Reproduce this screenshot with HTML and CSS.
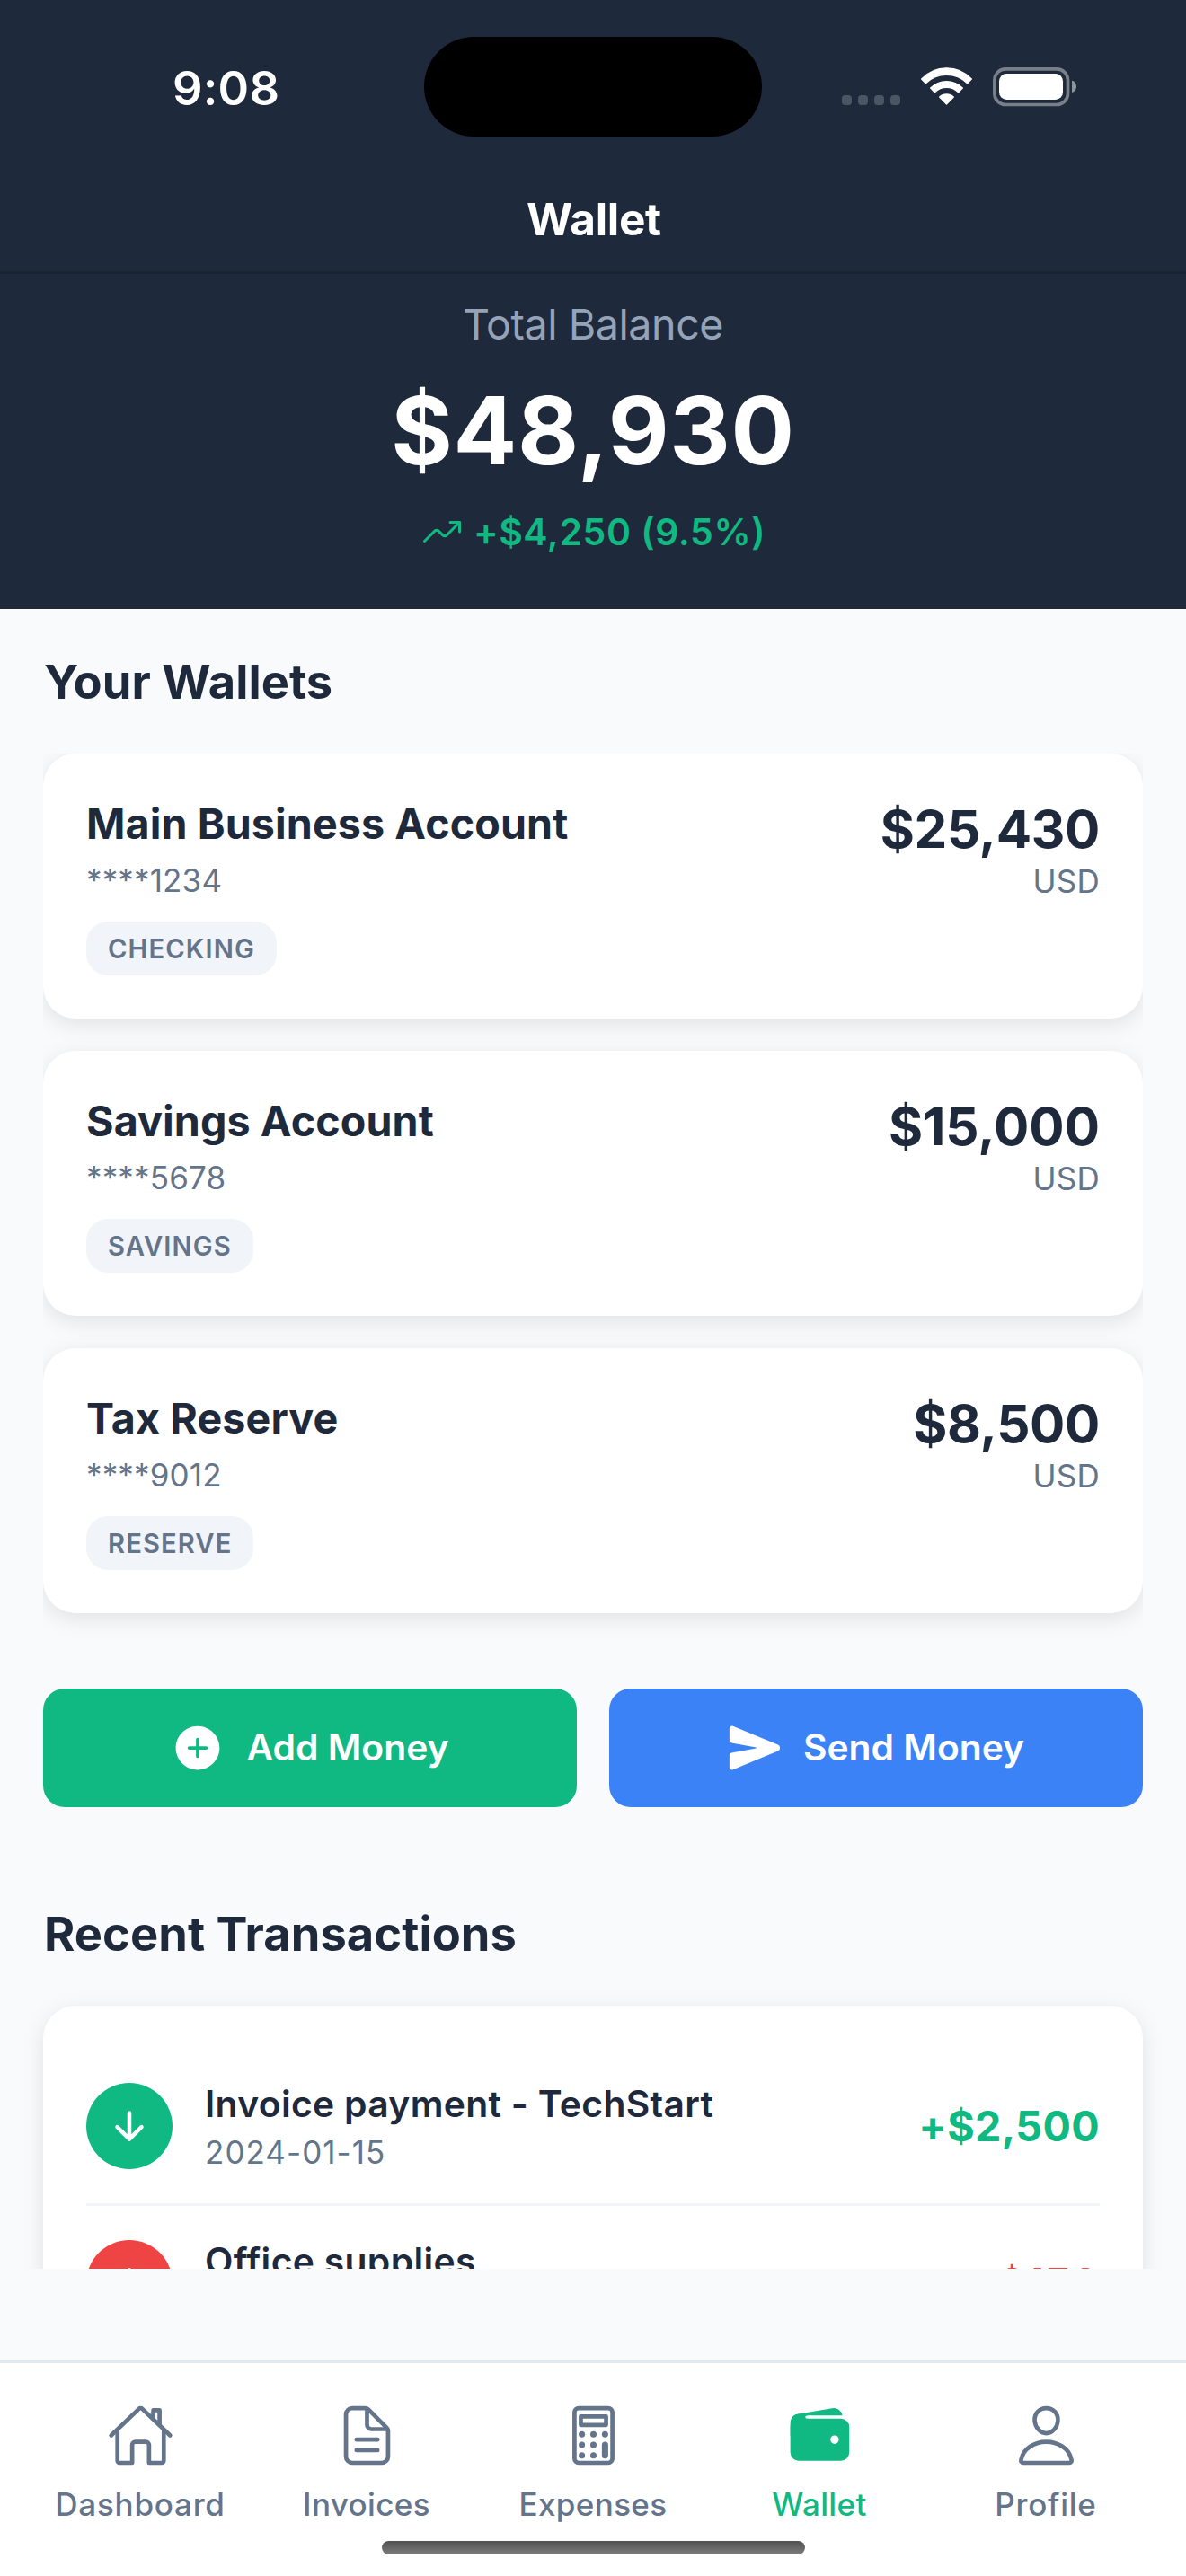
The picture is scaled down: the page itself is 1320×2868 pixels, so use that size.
FILE: index.html
```html
<!DOCTYPE html>
<html lang="en">
<head>
<meta charset="utf-8">
<title>Wallet</title>
<link rel="stylesheet" href="styles.css">
</head>
<body>
<div class="screen">
  <header class="top">
    <div class="status">
      <span class="time">9:08</span>
      <div class="island"></div>
      <svg class="status-icons" width="264" height="48" viewBox="0 0 792 144">
        <g fill="#4b5563">
          <rect x="0" y="102" width="33" height="33" rx="11"/>
          <rect x="54" y="102" width="33" height="33" rx="11"/>
          <rect x="108" y="102" width="33" height="33" rx="11"/>
          <rect x="162" y="102" width="33" height="33" rx="11"/>
        </g>
        <g fill="#fff" stroke="#fff" stroke-width="4" stroke-linejoin="round">
          <path d="M266 48A114 114 0 0 1 433 48L419 62A100 100 0 0 0 280 62Z"/>
          <path d="M296 78A76 76 0 0 1 403 78L389 92A57 57 0 0 0 310 92Z"/>
          <path d="M326 108A35 35 0 0 1 373 108L349.500 132Z"/>
        </g>
        <rect x="509.500" y="14.500" width="245" height="119" rx="37" fill="none" stroke="#787f89" stroke-width="11"/>
        <rect x="525" y="30" width="213" height="87" rx="25" fill="#fff"/>
        <path d="M768 53c9 2 15 10 15 20s-6 18-15 20z" fill="#8f959d"/>
      </svg>
    </div>
    <h1 class="title">Wallet</h1>
  </header>

  <section class="balance">
    <div class="balance-label">Total Balance</div>
    <div class="balance-amount">$48,930</div>
    <div class="balance-change">
      <svg width="48" height="48" viewBox="0 0 512 512" fill="none" stroke="currentColor" stroke-width="32" stroke-linecap="round" stroke-linejoin="round">
        <path d="M352 144h112v112"/>
        <path d="M48 368l121.370-121.370a32 32 0 0 1 45.260 0l50.740 50.740a32 32 0 0 0 45.260 0L464 144"/>
      </svg>
      <span>+$4,250 (9.5%)</span>
    </div>
  </section>

  <main class="scroll">
    <h2 class="section-title">Your Wallets</h2>
    <div class="wallets">
      <article class="card wallet">
        <div>
          <div class="wallet-name">Main Business Account</div>
          <div class="wallet-number">****1234</div>
          <span class="badge">CHECKING</span>
        </div>
        <div class="wallet-side">
          <div class="wallet-amount tight">$25,430</div>
          <div class="wallet-currency">USD</div>
        </div>
      </article>
      <article class="card wallet">
        <div>
          <div class="wallet-name">Savings Account</div>
          <div class="wallet-number">****5678</div>
          <span class="badge">SAVINGS</span>
        </div>
        <div class="wallet-side">
          <div class="wallet-amount">$15,000</div>
          <div class="wallet-currency">USD</div>
        </div>
      </article>
      <article class="card wallet">
        <div>
          <div class="wallet-name">Tax Reserve</div>
          <div class="wallet-number">****9012</div>
          <span class="badge">RESERVE</span>
        </div>
        <div class="wallet-side">
          <div class="wallet-amount tight">$8,500</div>
          <div class="wallet-currency">USD</div>
        </div>
      </article>
    </div>

    <div class="actions">
      <button class="action action-add">
        <svg width="60" height="60" viewBox="0 0 512 512">
          <path fill="currentColor" d="M256 48C141.310 48 48 141.310 48 256s93.310 208 208 208 208-93.310 208-208S370.690 48 256 48zm80 224h-64v64a16 16 0 0 1-32 0v-64h-64a16 16 0 0 1 0-32h64v-64a16 16 0 0 1 32 0v64h64a16 16 0 0 1 0 32z"/>
        </svg>
        <span class="action-label">Add Money</span>
      </button>
      <button class="action action-send">
        <svg width="60" height="60" viewBox="0 0 512 512">
          <path fill="currentColor" d="M476.590 227.050l-.160-.070L49.350 49.840A23.560 23.560 0 0 0 27.140 52 24.650 24.650 0 0 0 16 72.590v113.290a24 24 0 0 0 19.520 23.570l232.930 43.070a4 4 0 0 1 0 7.860L35.530 303.450A24 24 0 0 0 16 327v113.310A23.570 23.570 0 0 0 26.590 460a23.940 23.940 0 0 0 13.220 4 24.550 24.550 0 0 0 9.520-1.930L476.400 285.940l.190-.090a32 32 0 0 0 0-58.800z"/>
        </svg>
        <span class="action-label">Send Money</span>
      </button>
    </div>

    <h2 class="section-title">Recent Transactions</h2>
    <div class="card transactions">
      <div class="transaction">
        <div class="dot income">
          <svg width="48" height="48" viewBox="0 0 512 512" fill="none" stroke="currentColor" stroke-width="48" stroke-linecap="round" stroke-linejoin="round"><path d="M112 268l144 144 144-144M256 392V100"/></svg>
        </div>
        <div class="transaction-text">
          <div class="transaction-name">Invoice payment - TechStart</div>
          <div class="transaction-date">2024-01-15</div>
        </div>
        <div class="transaction-amount positive">+$2,500</div>
      </div>
      <div class="transaction">
        <div class="dot expense">
          <svg width="48" height="48" viewBox="0 0 512 512" fill="none" stroke="currentColor" stroke-width="48" stroke-linecap="round" stroke-linejoin="round"><path d="M112 244l144-144 144 144M256 120v292"/></svg>
        </div>
        <div class="transaction-text">
          <div class="transaction-name">Office supplies</div>
        </div>
        <div class="transaction-amount negative">-$150</div>
      </div>
    </div>
  </main>

  <nav class="tabs">
    <a class="tab">
      <svg width="75" height="75" viewBox="0 0 512 512" fill="none" stroke="currentColor" stroke-width="32" stroke-linecap="round" stroke-linejoin="round">
        <path d="M80 212v236a16 16 0 0 0 16 16h96V328a24 24 0 0 1 24-24h80a24 24 0 0 1 24 24v136h96a16 16 0 0 0 16-16V212"/>
        <path d="M480 256L266.890 52c-5-5.280-16.690-5.340-21.780 0L32 256M400 179V64h-48v69"/>
      </svg>
      <span class="wide">Dashboard</span>
    </a>
    <a class="tab">
      <svg width="75" height="75" viewBox="0 0 512 512" fill="none" stroke="currentColor" stroke-width="32" stroke-linecap="round" stroke-linejoin="round">
        <path d="M416 221.250V416a48 48 0 0 1-48 48H144a48 48 0 0 1-48-48V96a48 48 0 0 1 48-48h98.750a32 32 0 0 1 22.620 9.370l141.260 141.260a32 32 0 0 1 9.370 22.620z"/>
        <path d="M256 56v120a32 32 0 0 0 32 32h120M176 288h160M176 368h160"/>
      </svg>
      <span>Invoices</span>
    </a>
    <a class="tab">
      <svg width="75" height="75" viewBox="0 0 512 512">
        <g fill="none" stroke="currentColor" stroke-width="32" stroke-linejoin="round">
          <rect x="112" y="48" width="288" height="416" rx="32"/>
          <rect x="160" y="112" width="192" height="64"/>
        </g>
        <g fill="currentColor">
          <circle cx="168" cy="248" r="24"/><circle cx="256" cy="248" r="24"/><circle cx="344" cy="248" r="24"/>
          <circle cx="168" cy="328" r="24"/><circle cx="256" cy="328" r="24"/>
          <circle cx="168" cy="408" r="24"/><circle cx="256" cy="408" r="24"/>
          <rect x="320" y="304" width="48" height="128" rx="24"/>
        </g>
      </svg>
      <span>Expenses</span>
    </a>
    <a class="tab active">
      <svg width="75" height="75" viewBox="0 0 512 512" fill="currentColor">
        <path d="M95.500 104h320a87.730 87.730 0 0 1 11.180.710 66 66 0 0 0-77.510-55.560L86 94.080h-.300a66 66 0 0 0-41.070 26.130A87.570 87.570 0 0 1 95.500 104z"/>
        <path d="M415.500 128h-320a64.070 64.070 0 0 0-64 64v192a64.070 64.070 0 0 0 64 64h320a64.070 64.070 0 0 0 64-64V192a64.070 64.070 0 0 0-64-64zM368 320a32 32 0 1 1 32-32 32 32 0 0 1-32 32z"/>
        <path d="M32 259.500V160c0-21.670 12-58 53.650-65.870C121 87.500 156 87.500 156 87.500s23 16 4 16-18.500 24.500 0 24.500 0 23.500 0 23.500L85.500 236z"/>
      </svg>
      <span>Wallet</span>
    </a>
    <a class="tab">
      <svg width="75" height="75" viewBox="0 0 512 512" fill="none" stroke="currentColor" stroke-width="32" stroke-linecap="round" stroke-linejoin="round">
        <path d="M344 144c-3.920 52.870-44 96-88 96s-84.150-43.120-88-96c-4-55 35-96 88-96s92 42 88 96z"/>
        <path d="M256 304c-87 0-175.300 48-191.640 138.600C62.390 453.520 68.570 464 80 464h352c11.440 0 17.620-10.480 15.650-21.400C431.300 352 343 304 256 304z"/>
      </svg>
      <span class="wide">Profile</span>
    </a>
    <div class="home-indicator"></div>
  </nav>
</div>
</body>
</html>
```
FILE: styles.css
```css
* { box-sizing: border-box; }

body {
  margin: 0;
  background: #f8fafc;
  font-family: Inter, "Liberation Sans", sans-serif;
  color: #1e293b;
}

h1, h2 { margin: 0; }
svg { display: block; flex: none; }

.screen {
  display: flex;
  flex-direction: column;
  width: 1320px;
  height: 2868px;
  overflow: hidden;
  white-space: nowrap;
}

/* Status bar and navigation header */
.top {
  height: 305px;
  background: #1e293b;
  border-bottom: 3px solid #192433;
  color: #fff;
}
.status {
  display: grid;
  grid-template-columns: 472px 376px 1fr;
  align-items: start;
  height: 186px;
}
.time {
  padding: 66px 0 0 192px;
  font-size: 52.4px;
  font-weight: 600;
  line-height: 64px;
  letter-spacing: 0.2px;
}
.island {
  height: 111px;
  margin-top: 41px;
  border-radius: 56px;
  background: #000;
}
.status-icons { margin: 72px 0 0 89px; }
.title {
  padding-left: 2px;
  font-size: 49.5px;
  font-weight: 700;
  line-height: 116px;
  letter-spacing: -0.3px;
  text-align: center;
}

/* Balance summary */
.balance {
  display: flex;
  flex-direction: column;
  align-items: center;
  height: 373px;
  padding-top: 27px;
  background: #1e293b;
}
.balance-label {
  font-size: 46.6px;
  line-height: 58px;
  letter-spacing: -0.43px;
  color: #94a3b8;
}
.balance-amount {
  margin-top: 25px;
  font-size: 104.7px;
  font-weight: 700;
  line-height: 129px;
  letter-spacing: 0.6px;
  color: #fff;
}
.balance-change {
  display: flex;
  align-items: center;
  gap: 11px;
  margin-top: 22px;
  font-size: 41px;
  font-weight: 600;
  line-height: 52px;
  letter-spacing: 0.55px;
  color: #10b981;
}

/* Scrolling content */
.scroll {
  height: 1848px;
  padding: 48px 48px 0;
  overflow: hidden;
}
.section-title {
  margin-bottom: 47px;
  padding-left: 1px;
  font-size: 52.4px;
  font-weight: 700;
  line-height: 66px;
  letter-spacing: 0.05px;
}
.card {
  background: #fff;
  border-radius: 36px;
  box-shadow: 0 6px 24px rgba(0, 0, 0, 0.1);
}

.wallets {
  display: flex;
  flex-direction: column;
  gap: 36px;
  padding-bottom: 36px;
  overflow: hidden;
}
.wallet {
  display: flex;
  justify-content: space-between;
  height: 295px;
  padding: 48px;
}
.wallet-name {
  font-size: 46.6px;
  font-weight: 700;
  line-height: 60px;
  letter-spacing: 0.12px;
}
.wallet-number {
  margin-top: 12px;
  font-size: 35px;
  line-height: 42px;
  letter-spacing: 0.15px;
  color: #64748b;
}
.badge {
  display: block;
  width: fit-content;
  margin-top: 25px;
  padding: 1px 24px 0;
  border-radius: 24px;
  background: #f1f5f9;
  font-size: 29.2px;
  font-weight: 600;
  line-height: 59px;
  letter-spacing: 1.1px;
  color: #64748b;
}
.wallet-side { text-align: right; }
.wallet-amount {
  font-size: 58.3px;
  font-weight: 700;
  line-height: 73px;
}
.wallet-amount.tight { letter-spacing: -0.35px; }
.wallet-currency {
  font-size: 35px;
  line-height: 43px;
  letter-spacing: 0.25px;
  color: #64748b;
}

.actions {
  display: grid;
  grid-template-columns: 1fr 1fr;
  gap: 36px;
  margin: 48px 0 108px;
}
.action {
  display: flex;
  align-items: center;
  justify-content: center;
  gap: 24px;
  height: 132px;
  padding: 0;
  border: 0;
  border-radius: 24px;
  font: 600 40.8px/52px Inter, "Liberation Sans", sans-serif;
  color: #fff;
}
.action-label { padding-bottom: 2px; }
.action-add { background: #10b981; }
.action-send { background: #3b82f6; }

.transactions {
  height: 700px;
  padding: 48px;
}
.transaction {
  display: flex;
  align-items: center;
  gap: 36px;
  height: 175px;
  border-bottom: 3px solid #f1f5f9;
}
.dot {
  display: flex;
  align-items: center;
  justify-content: center;
  width: 96px;
  height: 96px;
  border-radius: 50%;
  color: #fff;
}
.income { background: #10b981; }
.expense { background: #ef4444; }
.transaction-text {
  flex: 1;
  height: 100px;
}
.transaction-name {
  font-size: 40.8px;
  font-weight: 600;
  line-height: 51px;
  letter-spacing: 0.33px;
}
.transaction-date {
  margin-top: 7px;
  font-size: 35px;
  line-height: 42px;
  letter-spacing: 1.05px;
  color: #64748b;
}
.transaction-amount {
  font-size: 46.6px;
  font-weight: 700;
  line-height: 58px;
  letter-spacing: 0.34px;
}
.positive { color: #10b981; }
.negative { color: #ef4444; }

/* Bottom tab bar */
.tabs {
  position: relative;
  display: grid;
  grid-template-columns: repeat(5, 252px);
  justify-content: center;
  height: 240px;
  margin-top: 102px;
  padding-top: 43px;
  border-top: 3px solid #e2e8f0;
  background: #fff;
}
.tab {
  display: flex;
  flex-direction: column;
  align-items: center;
  gap: 18px;
  font-size: 35px;
  font-weight: 500;
  line-height: 43px;
  letter-spacing: 0.35px;
  color: #64748b;
}
.tab.active { color: #10b981; }
.wide { letter-spacing: 0.75px; }
.home-indicator {
  position: absolute;
  left: 425px;
  bottom: 24px;
  width: 471px;
  height: 15px;
  border-radius: 8px;
  background: linear-gradient(#505050, #7d7d7d);
}
```
